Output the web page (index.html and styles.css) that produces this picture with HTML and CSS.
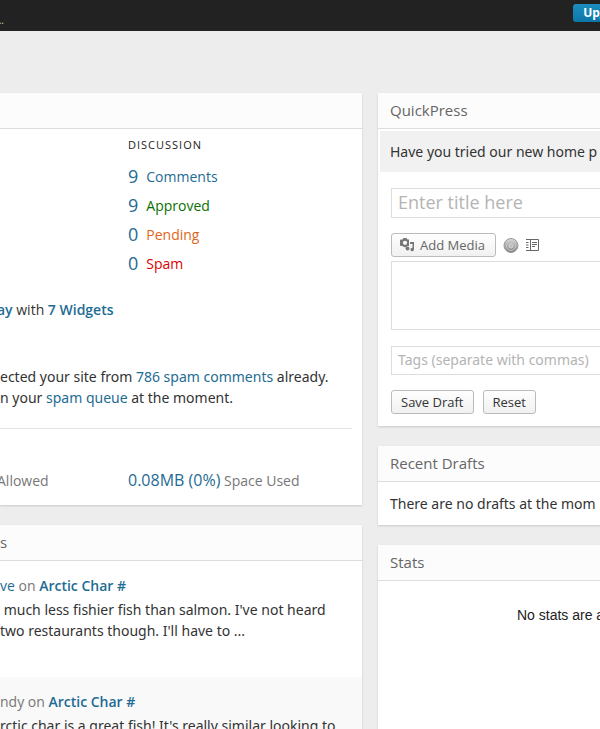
FILE: index.html
```html
<!DOCTYPE html>
<html lang="en">
<head>
    <meta charset="utf-8">
    <title>Dashboard</title>
    <link rel="stylesheet" href="styles.css">
</head>
<body>
    <header class="topbar">
        <span class="topbar-title">...</span>
        <button type="button" class="upgrade">Upgrade</button>
    </header>

    <main class="dashboard">
        <div class="column">
            <section class="panel right-now">
                <h2 class="panel-title">&nbsp;</h2>
                <div class="discussion">
                    <h3>Discussion</h3>
                    <table>
                        <tr><td><a href="#">9</a></td><td><a href="#">Comments</a></td></tr>
                        <tr><td><a href="#">9</a></td><td><a href="#" class="approved">Approved</a></td></tr>
                        <tr><td><a href="#">0</a></td><td><a href="#" class="pending">Pending</a></td></tr>
                        <tr><td><a href="#">0</a></td><td><a href="#" class="spam">Spam</a></td></tr>
                    </table>
                </div>
                <p class="theme"><a href="#"><b>ay</b></a> with <a href="#"><b>7 Widgets</b></a></p>
                <p class="akismet">ected your site from <a href="#">786 spam comments</a> already.<br>n your <a href="#">spam queue</a> at the moment.</p>
                <div class="storage">
                    <span>Allowed</span>
                    <span><a href="#">0.08MB (0%)</a> Space Used</span>
                </div>
            </section>

            <section class="panel comments">
                <h2 class="panel-title">s</h2>
                <article class="comment">
                    <h4><a href="#">ve</a> on <a href="#"><b>Arctic Char</b></a> <a href="#"><b>#</b></a></h4>
                    <p>&nbsp;much less fishier fish than salmon. I've not heard<br>two restaurants though. I'll have to ...</p>
                </article>
                <article class="comment alt">
                    <h4>ndy on <a href="#"><b>Arctic Char</b></a> <a href="#"><b>#</b></a></h4>
                    <p>rctic char is a great fish! It's really similar looking to</p>
                </article>
            </section>
        </div>

        <div class="column">
            <section class="panel">
                <h2 class="panel-title">QuickPress</h2>
                <p class="notice">Have you tried our new home p</p>
                <form class="quickpress">
                    <input type="text" class="title-input" placeholder="Enter title here" aria-label="Title">
                    <div class="media-row">
                        <button type="button" class="button media">
                            <svg width="15" height="14" viewBox="0 0 15 14" fill="#777">
                                <path fill-rule="evenodd" d="M1 1.500h1.500L3.500 0h3l1 1.500H9V8H7.500A3.500 3.500 0 0 1 2.500 8H1a1 1 0 0 1-1-1V2.500a1 1 0 0 1 1-1zM5 2.700a2.100 2.100 0 1 0 0 4.200a2.100 2.100 0 0 0 0-4.200z"/>
                                <path d="M10 4h4v7.500a1.800 1.800 0 1 1-1.500-1.800V6H10z"/>
                                <circle cx="7.500" cy="10.500" r="1.900"/>
                            </svg>
                            Add Media
                        </button>
                        <button type="button" class="icon-button" aria-label="Add poll">
                            <svg width="16" height="16" viewBox="0 0 16 16">
                                <defs>
                                    <linearGradient id="disc" x1="0" y1="0" x2="0" y2="1">
                                        <stop offset="0" stop-color="#dcdcdc"/>
                                        <stop offset="1" stop-color="#808080"/>
                                    </linearGradient>
                                </defs>
                                <circle cx="8" cy="8.500" r="7" fill="url(#disc)" stroke="#999"/>
                                <circle cx="8" cy="9" r="4.500" fill="none" stroke="#c4c4c4"/>
                                <circle cx="8" cy="9" r="2" fill="#bbb" stroke="#d4d4d4"/>
                            </svg>
                        </button>
                        <button type="button" class="icon-button" aria-label="Add form">
                            <svg width="13" height="12" viewBox="0 0 13 12" fill="none" stroke="#666">
                                <path d="M0 .5h12.500v11H0M4.500 .5v11M0 3.500h2.500M0 6h2.500M0 8.500h2.500M6 3.500h5M6 5.500h5M6 7.500h3"/>
                            </svg>
                        </button>
                    </div>
                    <textarea aria-label="Content"></textarea>
                    <input type="text" class="tags-input" placeholder="Tags (separate with commas)" aria-label="Tags">
                    <div class="actions">
                        <button type="button" class="button">Save Draft</button>
                        <button type="reset" class="button">Reset</button>
                    </div>
                </form>
            </section>

            <section class="panel">
                <h2 class="panel-title">Recent Drafts</h2>
                <p class="drafts">There are no drafts at the mom</p>
            </section>

            <section class="panel stats">
                <h2 class="panel-title">Stats</h2>
                <p>No stats are a</p>
            </section>
        </div>
    </main>
</body>
</html>
```

FILE: styles.css
```css
* {
    box-sizing: border-box;
}

body {
    display: flex;
    flex-direction: column;
    height: 100vh;
    margin: 0;
    overflow: hidden;
    background: #ededed;
    color: #333;
    font: 14px/21px "Open Sans", sans-serif;
    white-space: nowrap;
}

h2, h3, h4, p {
    margin: 0;
    font-weight: normal;
}

a {
    color: #1e6b93;
    text-decoration: none;
}

b {
    font-weight: 600;
}

/* the dashboard is wider than a narrow window and runs off its right side */
.topbar, .dashboard {
    width: calc(100% + 140px);
}

.topbar {
    display: flex;
    justify-content: space-between;
    align-items: flex-start;
    flex: none;
    height: 31px;
    padding: 4px 96px 0 0;
    background: #222;
    color: #ccc;
}

.topbar-title {
    padding-top: 6px;
    font-size: 10px;
    line-height: 20px;
    margin-left: -4px;
}

.upgrade {
    height: 18px;
    padding: 0 10px;
    border: 0;
    border-radius: 3px;
    background: linear-gradient(#1e8cbe, #0d76a8);
    color: #fff;
    font: bold 12px/18px "Open Sans", sans-serif;
}

.dashboard {
    display: grid;
    grid-template-columns: 1fr 1fr;
    gap: 16px;
    flex: 1;
    padding-top: 62px;
}

.column {
    display: flex;
    flex-direction: column;
    gap: 20px;
    min-width: 0;
}

.panel {
    background: #fff;
    box-shadow: 0 1px 2px rgba(0, 0, 0, 0.15);
}

.panel-title {
    height: 36px;
    padding: 0 12px;
    border-bottom: 1px solid #ddd;
    background: #fcfcfc;
    color: #666;
    font-size: 15px;
    line-height: 34px;
}

.comments .panel-title {
    padding-left: 0;
}

/* Right now */
.discussion {
    padding: 5px 0 0 128px;
}

.discussion h3 {
    color: #222;
    font-size: 11px;
    letter-spacing: 1px;
    text-transform: uppercase;
}

.discussion table {
    margin-top: 7px;
    border-collapse: collapse;
}

.discussion td {
    height: 29px;
    padding: 0 8px 0 0;
}

.discussion td:first-child {
    font-size: 18px;
}

.discussion .approved {
    color: #0a7000;
}

.discussion .pending {
    color: #e0661a;
}

.discussion .spam {
    color: #e00000;
}

.theme, .storage {
    margin-left: -3px;
}

.theme {
    padding-top: 21px;
}

.akismet {
    margin-right: 10px;
    padding: 46px 0 20px;
    border-bottom: 1px solid #e5e5e5;
}

.storage {
    display: grid;
    grid-template-columns: 131px 1fr;
    padding: 41px 0 14px;
    color: #777;
}

.storage a {
    font-size: 16px;
}

/* Comments */
.comments {
    flex: 1;
}

.comment {
    height: 116px;
    padding-top: 14px;
}

.comment h4 {
    margin-bottom: 3px;
    color: #777;
    font-size: 14px;
}

.comment.alt {
    background: #f9f9f9;
}

.comment p, .akismet, .notice, .drafts {
    font-family: "Noto Sans", "Open Sans", sans-serif;
}

/* QuickPress */
.notice {
    margin: 2px 2px 0;
    padding: 10px;
    background: #f1f1f1;
}

.quickpress {
    display: flex;
    flex-direction: column;
    padding: 16px 13px 12px;
}

input, textarea {
    width: 100%;
    border: 1px solid #ddd;
    border-radius: 0;
    font-family: "Open Sans", sans-serif;
}

input {
    padding: 0 6px 2px;
}

::placeholder {
    color: #b4b4b4;
}

.title-input {
    height: 30px;
    font-size: 18px;
}

.media-row {
    display: flex;
    align-items: center;
    gap: 7px;
    margin: 15px 0 4px;
}

.button {
    height: 24px;
    padding: 0 9px;
    border: 1px solid #bbb;
    border-radius: 3px;
    background: linear-gradient(#fefefe, #f1f1f1);
    color: #333;
    font: 13px/22px "Open Sans", sans-serif;
}

.media {
    display: flex;
    align-items: center;
    gap: 5px;
    padding: 0 10px 0 8px;
    color: #666;
}

.icon-button {
    display: flex;
    padding: 0;
    border: 0;
    background: none;
}

textarea {
    height: 69px;
    resize: none;
}

.tags-input {
    height: 29px;
    margin-top: 16px;
    font-family: "Noto Sans", "Open Sans", sans-serif;
    font-size: 14px;
}

.actions {
    display: flex;
    gap: 9px;
    margin-top: 15px;
}

.drafts {
    padding: 11px 12px;
}

.stats {
    flex: 1;
}

.stats p {
    padding: 24px 0 0 139px;
    color: #222;
    font-family: "Liberation Sans", Arial, sans-serif;
}
```
